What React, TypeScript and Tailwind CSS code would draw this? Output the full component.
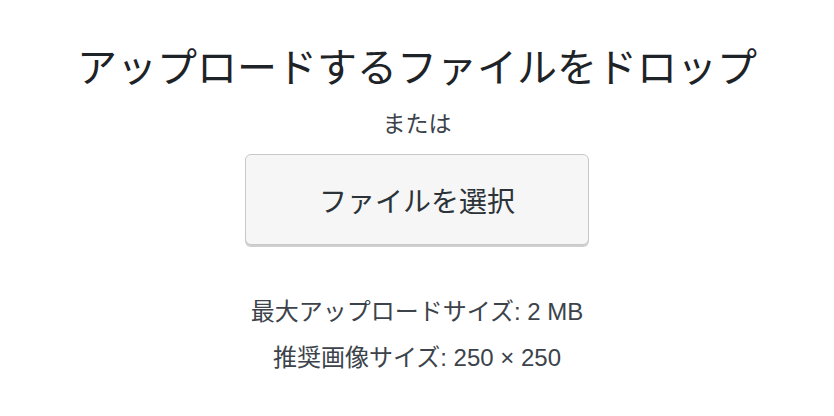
export default function App() {
  return (
    <div
      className="w-[834px] h-[416px] bg-white flex flex-col items-center text-[#3c434a]"
      style={{ fontFamily: '"Noto Sans CJK JP", "Noto Sans", sans-serif' }}
    >
      <h2 className="mt-[38px] text-[40px] leading-[54px] text-[#1d2327] font-normal">
        アップロードするファイルをドロップ
      </h2>
      <p className="mt-[14px] text-[23px] leading-[32px]">または</p>
      <button className="mt-[16px] w-[344px] h-[91px] rounded-[6px] border border-[#c8c8c8] bg-[#f6f6f6] shadow-[0_2px_0_#cfcfcf] text-[28px] text-[#2c3338]">
        ファイルを選択
      </button>
      <div
        className="flex flex-col items-center"
        style={{ fontFamily: '"Liberation Sans", "Noto Sans CJK JP", sans-serif' }}
      >
        <p className="mt-[51px] text-[24px] leading-[32px]">最大アップロードサイズ: 2 MB</p>
        <p className="mt-[14px] text-[24px] leading-[32px]">推奨画像サイズ: 250 × 250</p>
      </div>
    </div>
  );
}
